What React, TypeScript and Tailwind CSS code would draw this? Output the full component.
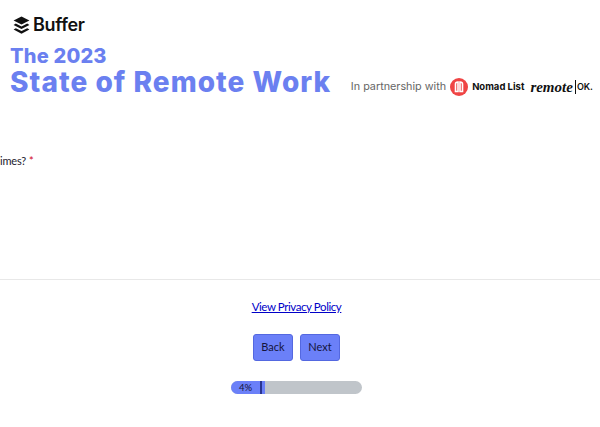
import React from 'react';

function BufferLogo() {
  return (
    <svg width="17" height="19" viewBox="0 0 16 18" className="shrink-0">
      <path d="M8 0.5 L15.5 4.3 L8 8 L0.5 4.3 Z" fill="#111" />
      <path d="M2.6 7.2 L8 9.9 L13.4 7.2 L15.5 8.6 L8 12.3 L0.5 8.6 Z" fill="#111" />
      <path d="M2.6 11.5 L8 14.2 L13.4 11.5 L15.5 12.9 L8 16.8 L0.5 12.9 Z" fill="#111" />
    </svg>
  );
}

function NomadLogo() {
  return (
    <svg width="18" height="18" viewBox="0 0 18 18" className="shrink-0">
      <circle cx="9" cy="9" r="9" fill="#ef4444" />
      <path d="M5.5 13.5 V6 Q5.5 4 8 4 V13.5 Z M10 4 Q12.5 4 12.5 6 V13.5 H10 Z" fill="none" stroke="#fff" strokeWidth="1.6" />
    </svg>
  );
}

export default function App() {
  return (
    <div className="w-[600px] h-[427px] overflow-hidden bg-white font-['Lato','Liberation_Sans',sans-serif] text-[#1a1a2e]">
      <header className="h-[96px] pl-[10px] pt-[15px]">
        <div className="flex items-center gap-[3px] pl-[3px] h-[20px]">
          <BufferLogo />
          <span className="font-['Inter',sans-serif] font-semibold text-[18px] leading-none tracking-[-0.3px] text-[#111]">Buffer</span>
        </div>
        <div className="flex items-end justify-between pr-[7px]">
          <div className="font-['Inter',sans-serif] font-extrabold text-[#6b80f0]">
            <div className="text-[20px] leading-[20px] mt-[11px] tracking-[0.2px]">The 2023</div>
            <div className="text-[28px] leading-[28px] mt-[2px] tracking-[1.05px] whitespace-nowrap">State of Remote Work</div>
          </div>
          <div className="flex items-center whitespace-nowrap">
            <span className="font-['Inter',sans-serif] text-[10.8px] text-[#666] mr-[4px]">In partnership with</span>
            <NomadLogo />
            <span className="font-['Inter',sans-serif] font-bold text-[9.5px] text-[#111] ml-[4px] mr-[6px]">Nomad List</span>
            <span className="font-['Liberation_Serif',serif] italic font-bold text-[15px] leading-none text-[#111]">remote</span>
            <span className="font-['Inter',sans-serif] font-semibold text-[9px] text-[#111] border-l border-[#111] ml-[2px] pl-[1px]">OK.</span>
          </div>
        </div>
      </header>

      <main className="h-[183px] pt-[56px]">
        <p className="flex gap-[3px] text-[11px] leading-[18px]">
          <span className="tracking-[-0.2px]">imes?</span>
          <span className="text-[#d0021b]">*</span>
        </p>
      </main>

      <footer className="border-t border-[#e8e8e8]">
        <div className="flex flex-col items-center pr-[7px]">
          <a href="#" className="mt-[19px] text-[11.5px] leading-[16px] tracking-[-0.42px] text-[#0000c8] underline">View Privacy Policy</a>
          <div className="flex gap-[7px] mt-[19px]">
            <button className="w-[40px] h-[27px] rounded-[3px] border border-[#5468e0] bg-[#6b80f8] text-[11px] text-[#14143c]">Back</button>
            <button className="w-[40px] h-[27px] rounded-[3px] border border-[#5468e0] bg-[#6b80f8] text-[11px] text-[#14143c]">Next</button>
          </div>
          <div className="mt-[20px] w-[131px] h-[13px] rounded-full bg-[#c0c5ca] overflow-hidden flex">
            <div className="w-[34px] h-full bg-[#6b80f8] flex items-center justify-between pl-[8px]">
              <span className="text-[9.5px] leading-none text-[#14143c]">4%</span>
              <span className="w-[2px] h-full bg-[#2a3590] mr-[3px]" />
            </div>
          </div>
        </div>
      </footer>
    </div>
  );
}
